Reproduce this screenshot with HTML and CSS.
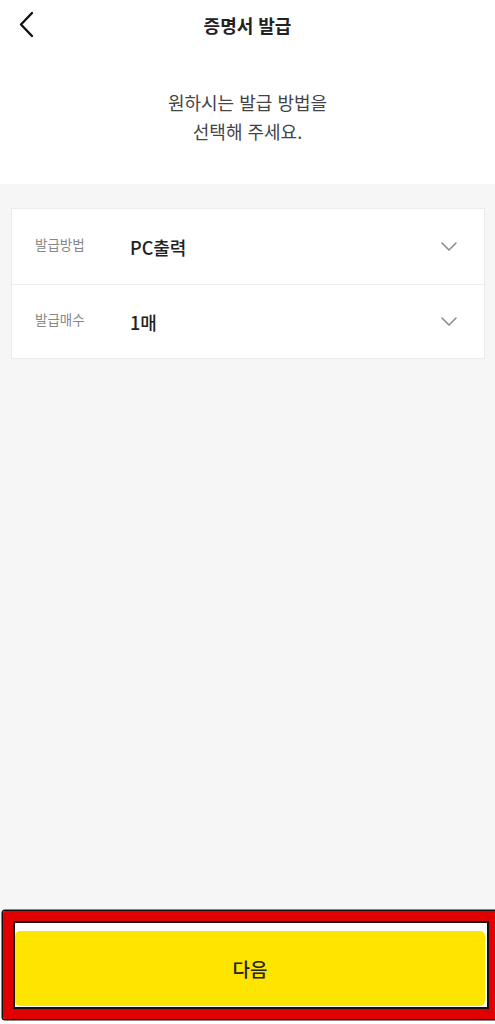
FILE: index.html
```html
<!DOCTYPE html>
<html lang="ko">
<head>
    <meta charset="UTF-8">
    <meta name="viewport" content="width=device-width, initial-scale=1.0">
    <title>증명서 발급</title>
    <link rel="stylesheet" href="styles.css">
</head>
<body>
    <div class="page">
        <header class="top-bar">
            <button class="back-btn" aria-label="뒤로">
                <svg width="16" height="28" viewBox="0 0 16 28">
                    <polyline points="13,2 2,13.5 13,25" fill="none" stroke="#111" stroke-width="2.4" stroke-linecap="round" stroke-linejoin="round"/>
                </svg>
            </button>
            <h1>증명서 발급</h1>
        </header>

        <div class="intro">
            <p>원하시는 발급 방법을<br>선택해 주세요.</p>
        </div>

        <main class="content">
            <div class="option-card">
                <div class="option-row">
                    <span class="option-label">발급방법</span>
                    <span class="option-value">PC출력</span>
                    <svg class="chevron" width="16" height="9" viewBox="0 0 16 9">
                        <polyline points="1,1 8,8 15,1" fill="none" stroke="#888" stroke-width="1.5" stroke-linecap="round" stroke-linejoin="round"/>
                    </svg>
                </div>
                <div class="option-row">
                    <span class="option-label">발급매수</span>
                    <span class="option-value">1매</span>
                    <svg class="chevron" width="16" height="9" viewBox="0 0 16 9">
                        <polyline points="1,1 8,8 15,1" fill="none" stroke="#888" stroke-width="1.5" stroke-linecap="round" stroke-linejoin="round"/>
                    </svg>
                </div>
            </div>
        </main>

        <footer class="bottom-bar">
            <button class="next-btn">다음</button>
        </footer>
    </div>

    <!-- highlight frame around the next button -->
    <div class="highlight"></div>
</body>
</html>
```

FILE: styles.css
```css
body {
    margin: 0;
    padding: 0;
    font-family: "Noto Sans CJK KR", "Noto Sans", sans-serif;
    background-color: #fff;
    color: #222;
}

.page {
    display: flex;
    flex-direction: column;
    height: 1024px;
}

.top-bar {
    position: relative;
    height: 50px;
    display: flex;
    align-items: center;
    justify-content: center;
}

.top-bar h1 {
    margin: 0;
    font-size: 18px;
    font-weight: 700;
    color: #222;
}

.back-btn {
    position: absolute;
    left: 19px;
    top: 11px;
    padding: 0;
    border: none;
    background: none;
}

.back-btn svg {
    display: block;
}

.intro {
    height: 134px;
    display: flex;
    justify-content: center;
    padding-top: 38px;
    box-sizing: border-box;
}

.intro p {
    margin: 0;
    font-size: 18px;
    line-height: 29px;
    color: #444;
    text-align: center;
}

.content {
    flex: 1;
    background-color: #f6f6f6;
    padding: 24px 10px 0 11px;
}

.option-card {
    background-color: #fff;
    border: 1px solid #ececec;
}

.option-row {
    display: flex;
    align-items: center;
    height: 75px;
    padding: 0 27px 0 23px;
}

.option-row + .option-row {
    border-top: 1px solid #efefef;
    height: 73px;
}

.option-label {
    width: 95px;
    font-size: 13.5px;
    color: #888;
    margin-bottom: 6px;
}

.option-value {
    flex: 1;
    font-size: 18px;
    font-weight: 500;
    color: #222;
}

.chevron {
    display: block;
}

.bottom-bar {
    background-color: #fff;
    padding: 8px 10px 18px 15px;
}

.next-btn {
    display: block;
    width: 100%;
    height: 75px;
    border: none;
    border-radius: 5px;
    background-color: #fee500;
    font-family: inherit;
    font-size: 19px;
    font-weight: 500;
    color: #222;
}

.highlight {
    position: absolute;
    left: 3px;
    top: 911px;
    width: 496px;
    height: 108px;
    box-sizing: border-box;
    border: 10px solid #e10000;
    border-radius: 2px;
    box-shadow: 0 0 0 1.5px #111, inset 0 0 0 2px #111;
    pointer-events: none;
}
```
